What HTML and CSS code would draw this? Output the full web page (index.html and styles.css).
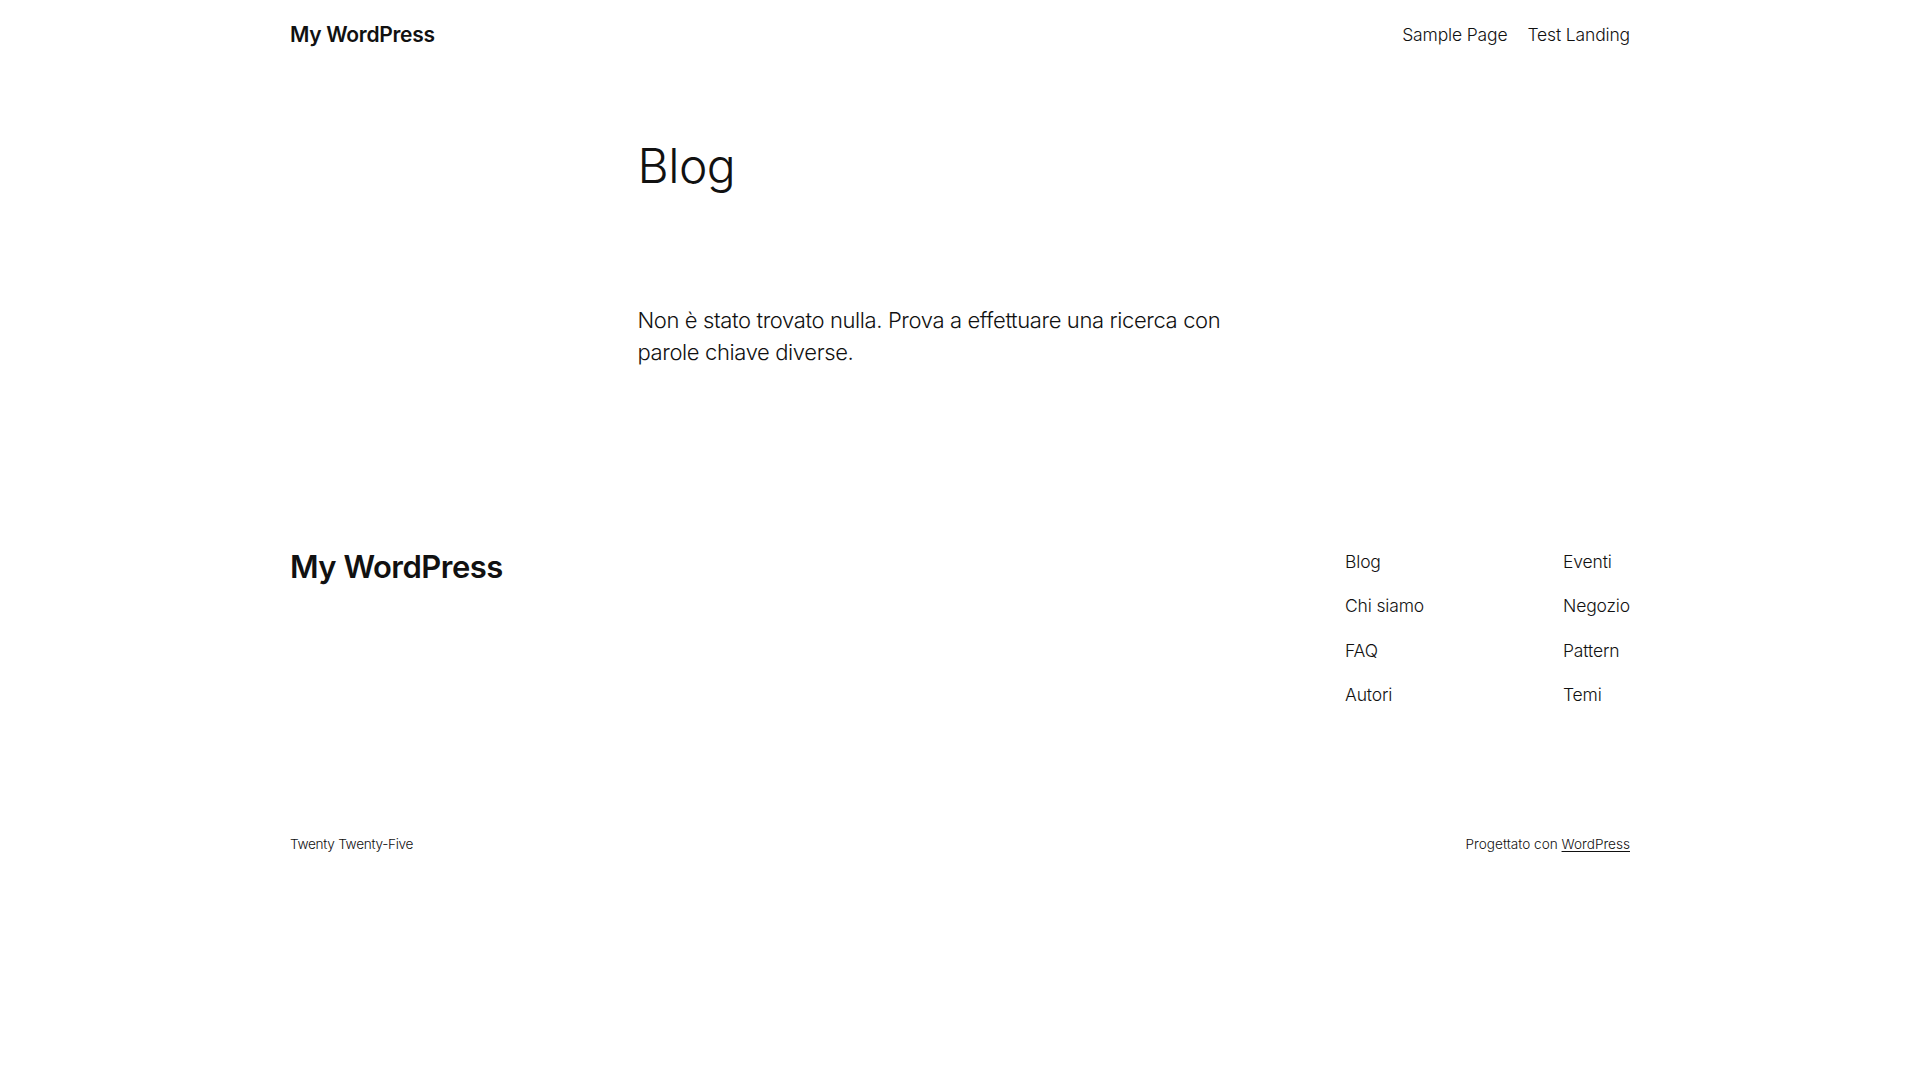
FILE: index.html
```html
<!DOCTYPE html>
<html lang="it">
<head>
<meta charset="utf-8">
<title>Blog – My WordPress</title>
<link rel="stylesheet" href="styles.css">
</head>
<body>
<header class="site-header">
  <a class="site-title" href="#">My WordPress</a>
  <nav class="main-nav">
    <a href="#">Sample Page</a>
    <a href="#">Test Landing</a>
  </nav>
</header>
<main class="site-main">
  <h1 class="page-title">Blog</h1>
  <p class="no-results">Non è stato trovato nulla. Prova a effettuare una ricerca con parole chiave diverse.</p>
</main>
<footer class="site-footer">
  <div class="footer-top">
    <a class="footer-title" href="#">My WordPress</a>
    <div class="footer-navs">
      <nav class="footer-col first">
        <a href="#">Blog</a>
        <a href="#">Chi siamo</a>
        <a href="#">FAQ</a>
        <a href="#">Autori</a>
      </nav>
      <nav class="footer-col">
        <a href="#">Eventi</a>
        <a href="#">Negozio</a>
        <a href="#">Pattern</a>
        <a href="#">Temi</a>
      </nav>
    </div>
  </div>
  <div class="footer-bottom">
    <span class="credit">Twenty Twenty-Five</span>
    <span>Progettato con <a class="wp-link" href="#">WordPress</a></span>
  </div>
</footer>
</body>
</html>
```

FILE: styles.css
```css
* { box-sizing: border-box; }
html, body { margin: 0; padding: 0; background: #ffffff; }
body {
  font-family: Inter, "Noto Sans", "DejaVu Sans", sans-serif;
  color: #111111;
  font-weight: 300;
  -webkit-font-smoothing: antialiased;
}
a { color: #111111; text-decoration: none; }

.site-header {
  width: 1340px;
  margin: 0 auto;
  height: 70px;
  display: flex;
  align-items: center;
  justify-content: space-between;
}
.site-title {
  font-size: 21px;
  font-weight: 600;
  letter-spacing: -0.3px;
  line-height: 1.2;
}
.main-nav {
  display: flex;
  gap: 20px;
  font-size: 17.5px;
  letter-spacing: -0.15px;
  line-height: 1.4;
}

.site-main {
  width: 645px;
  margin: 0 auto;
  padding-top: 67px;
}
.page-title {
  margin: 0;
  font-size: 48px;
  font-weight: 300;
  line-height: 1.2;
  letter-spacing: -0.5px;
}
.no-results {
  margin: 109px 0 0;
  font-size: 22px;
  line-height: 32px;
  letter-spacing: -0.38px;
}

.site-footer {
  width: 1340px;
  margin: 180px auto 0;
  padding-bottom: 40px;
}
.footer-top {
  display: flex;
  align-items: flex-start;
  justify-content: space-between;
}
.footer-title {
  font-size: 31px;
  font-weight: 600;
  letter-spacing: -0.5px;
  line-height: 1.2;
}
.footer-navs {
  display: flex;
  padding-top: 1px;
}
.footer-col {
  display: flex;
  flex-direction: column;
  gap: 19.5px;
  font-size: 17.5px;
  letter-spacing: -0.15px;
  line-height: 25px;
}
.footer-col.first { width: 218px; }

.footer-bottom {
  margin-top: 127px;
  display: flex;
  justify-content: space-between;
  font-size: 13.6px;
  letter-spacing: 0;
  line-height: 20px;
}
.credit { letter-spacing: -0.3px; }
.wp-link { text-decoration: underline; text-underline-offset: 2px; }
```
